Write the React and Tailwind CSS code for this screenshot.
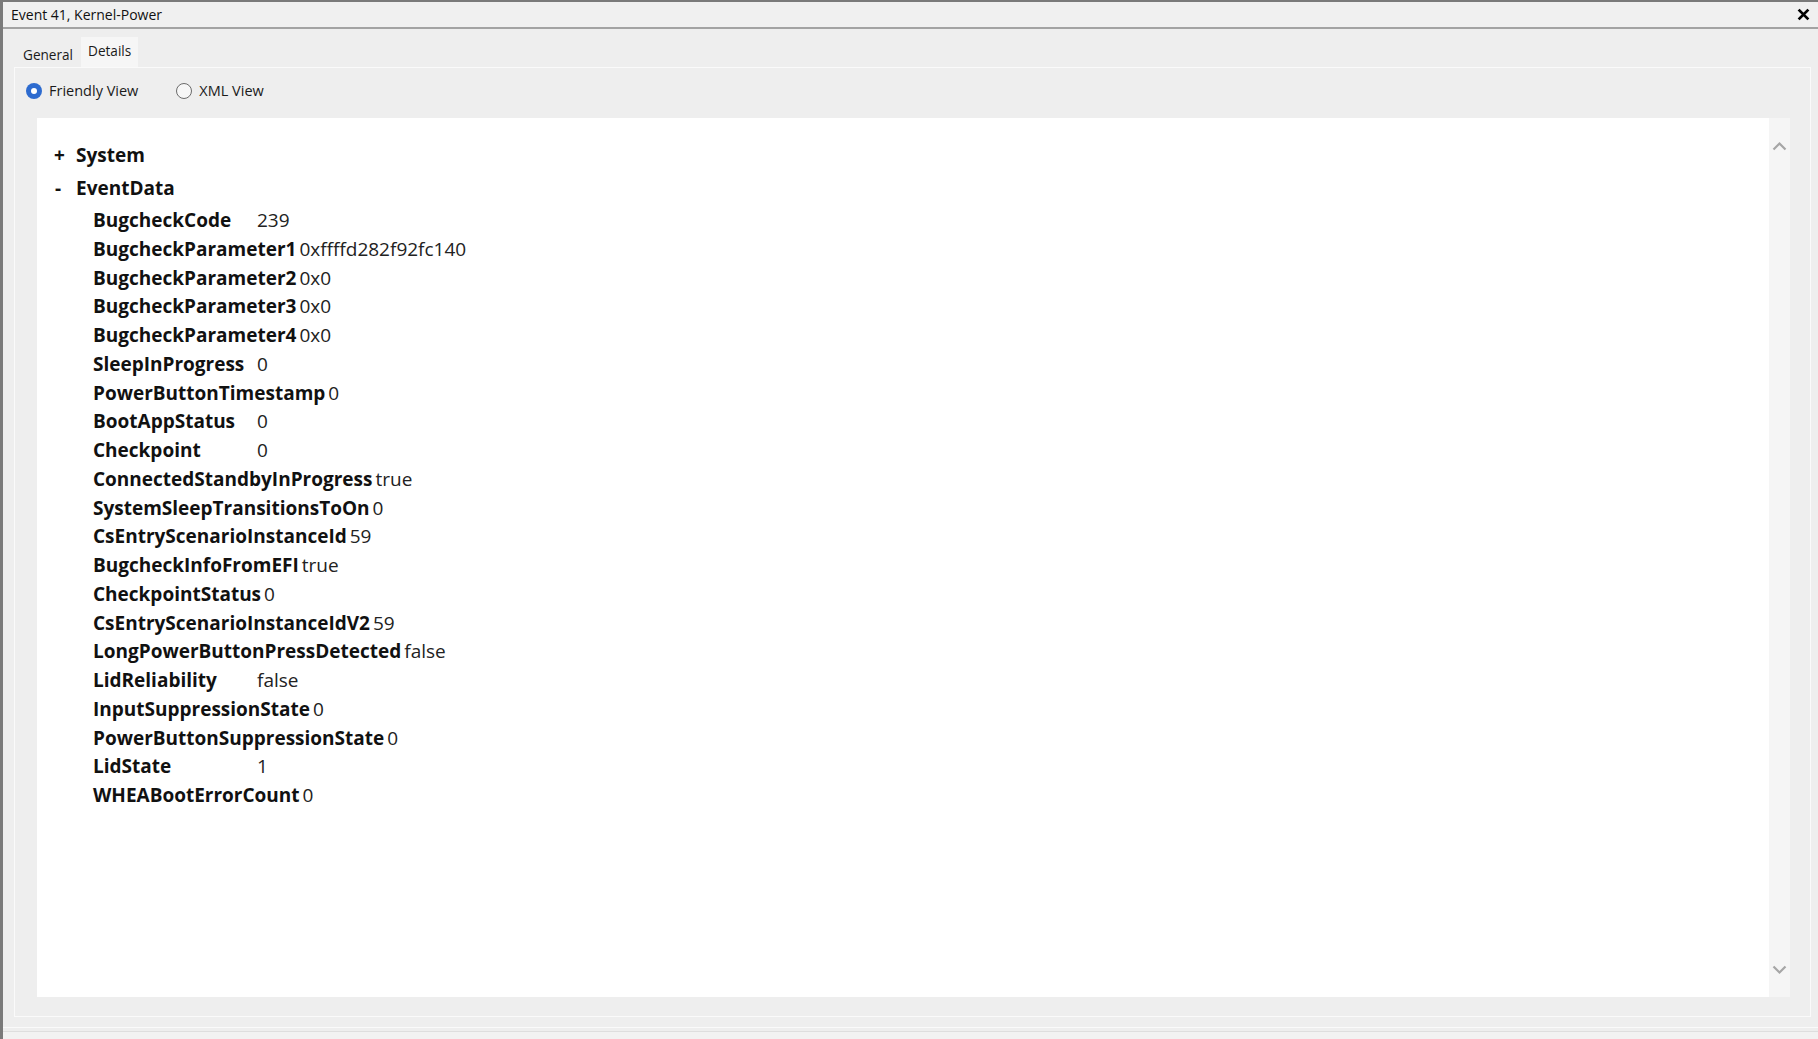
import React from 'react';

const FONT = { fontFamily: '"Open Sans", "Noto Sans", sans-serif' };

const rows = [
  ['BugcheckCode', '239'],
  ['BugcheckParameter1', '0xffffd282f92fc140'],
  ['BugcheckParameter2', '0x0'],
  ['BugcheckParameter3', '0x0'],
  ['BugcheckParameter4', '0x0'],
  ['SleepInProgress', '0'],
  ['PowerButtonTimestamp', '0'],
  ['BootAppStatus', '0'],
  ['Checkpoint', '0'],
  ['ConnectedStandbyInProgress', 'true'],
  ['SystemSleepTransitionsToOn', '0'],
  ['CsEntryScenarioInstanceId', '59'],
  ['BugcheckInfoFromEFI', 'true'],
  ['CheckpointStatus', '0'],
  ['CsEntryScenarioInstanceIdV2', '59'],
  ['LongPowerButtonPressDetected', 'false'],
  ['LidReliability', 'false'],
  ['InputSuppressionState', '0'],
  ['PowerButtonSuppressionState', '0'],
  ['LidState', '1'],
  ['WHEABootErrorCount', '0'],
];

const Radio = ({ checked, label }) => (
  <label className="flex items-center gap-[7px] text-[14.5px] text-[#1a1a1a]">
    {checked ? (
      <span className="w-[16px] h-[16px] rounded-full bg-[#2d6bcf] flex items-center justify-center">
        <span className="w-[6px] h-[6px] rounded-full bg-white" />
      </span>
    ) : (
      <span className="w-[16px] h-[16px] rounded-full border border-[#6b6b6b] bg-[#f7f7f7]" />
    )}
    {label}
  </label>
);

const App = () => {
  return (
    <div
      className="w-[1818px] h-[1039px] bg-[#eeeeee] border-l-[3px] border-t-[2px] border-[#7a7a7a] flex flex-col overflow-hidden"
      style={FONT}
    >
      {/* Title bar */}
      <div className="h-[27px] pl-[8px] pr-[8px] flex items-center justify-between bg-[#f0f0f0] border-b-[2px] border-[#a3a3a3]">
        <span className="text-[14px] text-[#111]">Event 41, Kernel-Power</span>
        <svg width="13" height="13" viewBox="0 0 12 12">
          <path d="M1.5 1.5 L10.5 10.5 M10.5 1.5 L1.5 10.5" stroke="#000" strokeWidth="2.6" />
        </svg>
      </div>

      {/* Tabs */}
      <div className="h-[38px] pl-[12px] flex items-end">
        <div className="px-[8px] pb-[2px] text-[13.6px] text-[#1a1a1a]">General</div>
        <div className="h-[30px] px-[7px] pt-[4px] bg-[#f6f6f6] text-[13.6px] text-[#1a1a1a]">Details</div>
      </div>

      {/* Panel */}
      <div className="ml-[11px] mr-[7px] h-[950px] bg-[#eeeeee] border border-[#fafafa] flex flex-col pl-[22px] pr-[20px] pb-[19px]">
        <div className="h-[50px] flex items-center gap-[38px] -ml-[11px] pb-[4px]">
          <Radio checked label="Friendly View" />
          <Radio label="XML View" />
        </div>

        <div className="flex-1 flex bg-white">
          <div className="flex-1 pl-[16px] pt-[22px]">
            <div className="flex items-center h-[30px] text-[19px] font-bold text-[#111]">
              <span className="w-[23px] pl-[1px]">+</span>
              <span>System</span>
            </div>
            <div className="flex items-center h-[34px] text-[19px] font-bold text-[#111] pt-[2px]">
              <span className="w-[23px] pl-[2px]">-</span>
              <span>EventData</span>
            </div>
            <div className="pl-[40px] pt-[2px]">
              {rows.map(([name, value]) => (
                <div key={name} className="flex items-center h-[28.75px] text-[19px] text-[#111]">
                  <span className="min-w-[164px] pr-[3px] font-bold">{name}</span>
                  <span className="text-[#222]">{value}</span>
                </div>
              ))}
            </div>
          </div>

          {/* Scrollbar */}
          <div className="w-[21px] bg-[#f5f5f5] flex flex-col items-center justify-between pt-[23px] pb-[22px]">
            <svg width="15" height="10" viewBox="0 0 15 10">
              <path d="M1.5 8.5 L7.5 2.5 L13.5 8.5" fill="none" stroke="#a6a6a6" strokeWidth="2.2" />
            </svg>
            <svg width="15" height="10" viewBox="0 0 15 10">
              <path d="M1.5 1.5 L7.5 7.5 L13.5 1.5" fill="none" stroke="#a6a6a6" strokeWidth="2.2" />
            </svg>
          </div>
        </div>
      </div>

      {/* Footer strip */}
      <div className="mt-[10px] border-t border-[#fafafa]" />
      <div className="mt-[3px] border-t border-[#dedede] flex-1 bg-[#f2f2f2]" />
    </div>
  );
};

export default App;
